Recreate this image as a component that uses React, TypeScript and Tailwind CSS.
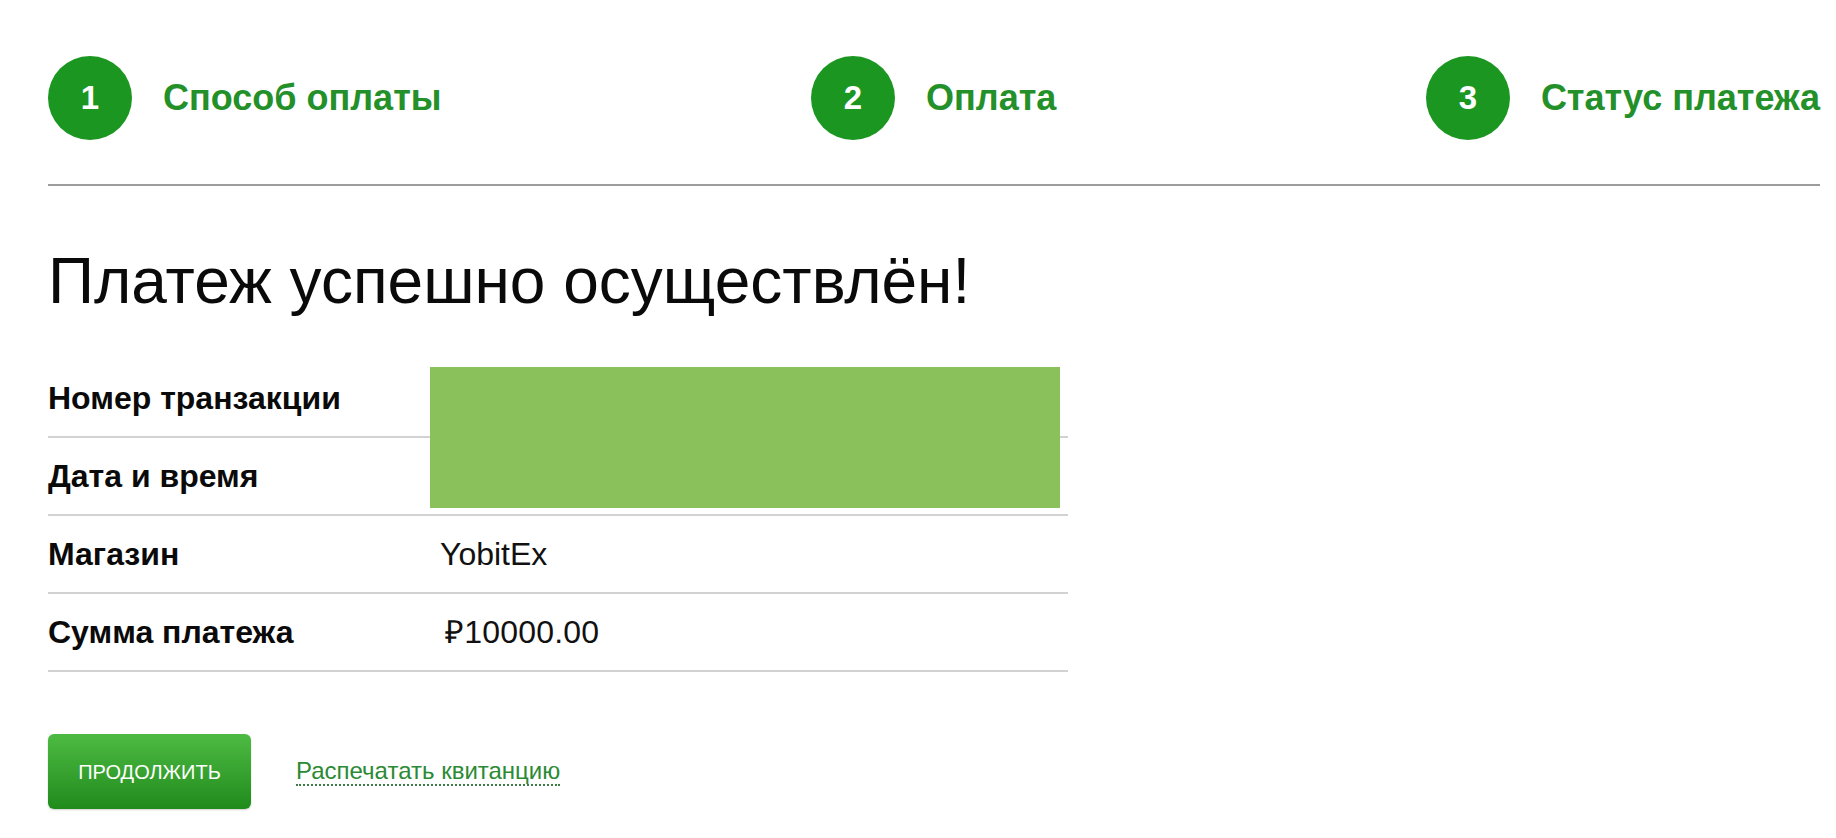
import React from "react";

const steps = [
  { num: 1, title: "Способ оплаты" },
  { num: 2, title: "Оплата" },
  { num: 3, title: "Статус платежа" },
];

const rows = [
  { label: "Номер транзакции", value: "" },
  { label: "Дата и время", value: "" },
  { label: "Магазин", value: "YobitEx" },
  { label: "Сумма платежа", value: "₽10000.00" },
];

const App = () => {
  return (
    <div
      className="min-h-screen w-full bg-white text-[#111]"
      style={{ fontFamily: '"Liberation Sans", Arial, sans-serif' }}
    >
      <div className="pl-[48px] pr-[16px]">
        {/* Steps */}
        <div className="flex items-center justify-between border-b-2 border-[#9c9c9c] pt-[56px] pb-[44px]">
          {steps.map((step) => (
            <div key={step.num} className="flex items-center">
              <div className="flex h-[84px] w-[84px] items-center justify-center rounded-full bg-[#1b9620] text-[33px] font-bold text-white">
                {step.num}
              </div>
              <span className="ml-[31px] text-[36px] font-bold leading-none text-[#23902a]">
                {step.title}
              </span>
            </div>
          ))}
        </div>

        <h1 className="mt-[63px] text-[64px] leading-[64px] font-normal text-[#0a0a0a]">
          Платеж успешно осуществлён!
        </h1>

        {/* Details */}
        <div className="relative mt-[47px] w-[1020px]">
          {rows.map((row) => (
            <div
              key={row.label}
              className="flex h-[78px] items-center border-b-2 border-[#d2d2d2]"
            >
              <div className="w-[392px] text-[32px] font-bold text-[#0a0a0a]">{row.label}</div>
              <div className={row.value.startsWith("₽") ? "pl-[5px] text-[32px] tracking-[0.2px]" : "text-[32px]"}>
                {row.value}
              </div>
            </div>
          ))}
          {/* redaction overlay */}
          <div className="absolute left-[382px] top-[7px] h-[141px] w-[630px] bg-[#8bc15a]" />
        </div>

        <div className="mt-[62px] flex items-center">
          <button className="h-[75px] w-[203px] rounded-[6px] bg-gradient-to-b from-[#4dbb43] to-[#1f8b1b] text-[20px] text-white shadow-[0_1px_2px_rgba(0,0,0,0.2)]">
            ПРОДОЛЖИТЬ
          </button>
          <a
            href="#"
            className="ml-[45px] border-b-2 border-dotted border-[#3d7d45] text-[24px] leading-[27px] text-[#2b8a34]"
          >
            Распечатать квитанцию
          </a>
        </div>
      </div>
    </div>
  );
};

export default App;
